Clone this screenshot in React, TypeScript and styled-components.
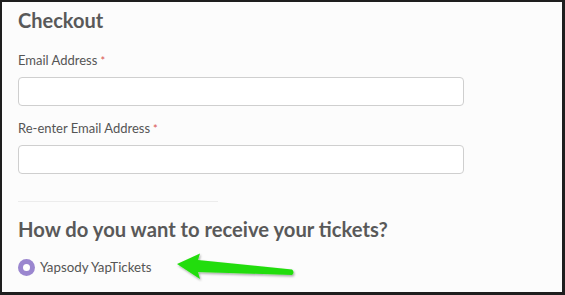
import React from "react";
import styled, { createGlobalStyle } from "styled-components";

const Global = createGlobalStyle`
  html, body { margin: 0; padding: 0; background: #fcfcfc; }
  * { box-sizing: border-box; }
`;

const Frame = styled.div`
  width: 565px;
  height: 295px;
  border-style: solid;
  border-color: #1e1e1e;
  border-width: 2px 3px 3px 2px;
  background: #fcfcfc;
  padding: 6px 0 0 16px;
  font-family: Lato, "Liberation Sans", sans-serif;
  color: #555;
  overflow: hidden;
`;

const Title = styled.h1`
  margin: 0;
  font-size: 20px;
  line-height: 24px;
  font-weight: 700;
  color: #595959;
`;

const Field = styled.div<{ $top: number }>`
  display: flex;
  flex-direction: column;
  gap: 8px;
  margin-top: ${(p) => p.$top}px;
  width: 446px;
`;

const Label = styled.label`
  font-size: 13px;
  line-height: 16px;
  color: #555;
`;

const Req = styled.span`
  color: #d9534f;
  font-size: 11px;
  margin-left: 3px;
`;

const Input = styled.input`
  height: 29px;
  width: 100%;
  border: 1px solid #cfcfcf;
  border-radius: 4px;
  background: #fff;
  outline: none;
`;

const Divider = styled.hr`
  width: 200px;
  margin: 27px 0 0;
  border: none;
  border-top: 1px solid #ececec;
`;

const Subtitle = styled.h2`
  margin: 15px 0 0;
  font-size: 20.2px;
  line-height: 24px;
  font-weight: 700;
  color: #595959;
`;

const OptionRow = styled.div`
  display: flex;
  align-items: center;
  gap: 5px;
  margin-top: 11px;
`;

const Radio = styled.span`
  width: 17px;
  height: 17px;
  border-radius: 50%;
  background: #9a86cf;
  display: flex;
  align-items: center;
  justify-content: center;
  flex-shrink: 0;
  &::after {
    content: "";
    width: 7px;
    height: 7px;
    border-radius: 50%;
    background: #fff;
  }
`;

const OptionText = styled.span`
  font-size: 13.3px;
  line-height: 16px;
  color: #555;
`;

const ArrowWrap = styled.span`
  margin-left: 19px;
  display: flex;
`;

const Arrow = () => (
  <svg width="122" height="30" viewBox="0 0 122 30">
    <defs>
      <filter id="sh" x="-10%" y="-30%" width="120%" height="170%">
        <feDropShadow dx="1" dy="1.5" stdDeviation="1.2" floodColor="#000" floodOpacity="0.35" />
      </filter>
    </defs>
    <path
      d="M1 12 L24 1.5 L22 8 L116 17.5 Q119 20 116 23 L22 20 L24 27 Z"
      fill="#22dd0c"
      filter="url(#sh)"
    />
  </svg>
);

export default function App() {
  return (
    <>
      <Global />
      <Frame>
        <Title>Checkout</Title>
        <Field $top={20}>
          <Label>
            Email Address<Req>*</Req>
          </Label>
          <Input />
        </Field>
        <Field $top={14}>
          <Label>
            Re-enter Email Address<Req>*</Req>
          </Label>
          <Input />
        </Field>
        <Divider />
        <Subtitle>How do you want to receive your tickets?</Subtitle>
        <OptionRow>
          <Radio />
          <OptionText>Yapsody YapTickets</OptionText>
          <ArrowWrap>
            <Arrow />
          </ArrowWrap>
        </OptionRow>
      </Frame>
    </>
  );
}
